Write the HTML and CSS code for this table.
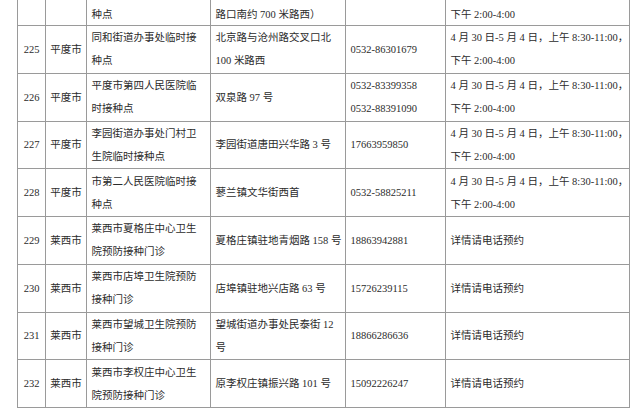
FILE: index.html
```html
<!DOCTYPE html>
<html lang="zh-CN">
<head>
<meta charset="utf-8">
<title>接种点</title>
<link rel="stylesheet" href="styles.css">
</head>
<body>
<div class="sheet">
<table class="sites">
<colgroup>
<col class="c-no"><col class="c-city"><col class="c-name"><col class="c-addr"><col class="c-tel"><col class="c-time">
</colgroup>
<tbody>
<tr class="cont">
<td class="num"></td><td class="city"></td>
<td>种点</td>
<td>路口南约 700 米路西）</td>
<td></td>
<td>下午 2:00-4:00</td>
</tr>
<tr>
<td class="num">225</td><td class="city">平度市</td>
<td>同和街道办事处临时接<br>种点</td>
<td>北京路与沧州路交叉口北<br>100 米路西</td>
<td>0532-86301679</td>
<td>4 月 30 日-5 月 4 日，上午 8:30-11:00，<br>下午 2:00-4:00</td>
</tr>
<tr>
<td class="num">226</td><td class="city">平度市</td>
<td>平度市第四人民医院临<br>时接种点</td>
<td>双泉路 97 号</td>
<td>0532-83399358<br>0532-88391090</td>
<td>4 月 30 日-5 月 4 日，上午 8:30-11:00，<br>下午 2:00-4:00</td>
</tr>
<tr>
<td class="num">227</td><td class="city">平度市</td>
<td>李园街道办事处门村卫<br>生院临时接种点</td>
<td>李园街道唐田兴华路 3 号</td>
<td>17663959850</td>
<td>4 月 30 日-5 月 4 日，上午 8:30-11:00，<br>下午 2:00-4:00</td>
</tr>
<tr>
<td class="num">228</td><td class="city">平度市</td>
<td>市第二人民医院临时接<br>种点</td>
<td>蓼兰镇文华街西首</td>
<td>0532-58825211</td>
<td>4 月 30 日-5 月 4 日，上午 8:30-11:00，<br>下午 2:00-4:00</td>
</tr>
<tr>
<td class="num">229</td><td class="city">莱西市</td>
<td>莱西市夏格庄中心卫生<br>院预防接种门诊</td>
<td>夏格庄镇驻地青烟路 158 号</td>
<td>18863942881</td>
<td>详情请电话预约</td>
</tr>
<tr>
<td class="num">230</td><td class="city">莱西市</td>
<td>莱西市店埠卫生院预防<br>接种门诊</td>
<td>店埠镇驻地兴店路 63 号</td>
<td>15726239115</td>
<td>详情请电话预约</td>
</tr>
<tr>
<td class="num">231</td><td class="city">莱西市</td>
<td>莱西市望城卫生院预防<br>接种门诊</td>
<td>望城街道办事处民泰街 12<br>号</td>
<td>18866286636</td>
<td>详情请电话预约</td>
</tr>
<tr>
<td class="num">232</td><td class="city">莱西市</td>
<td>莱西市李权庄中心卫生<br>院预防接种门诊</td>
<td>原李权庄镇振兴路 101 号</td>
<td>15092226247</td>
<td>详情请电话预约</td>
</tr>
</tbody>
</table>
</div>
</body>
</html>
```

FILE: styles.css
```css
html, body {
  margin: 0;
  padding: 0;
  background: #ffffff;
}

.sheet {
  width: 640px;
  height: 410px;
  overflow: hidden;
  padding-left: 17px;
  box-sizing: border-box;
}

.sites {
  margin-top: -1px;
  border-collapse: collapse;
  table-layout: fixed;
  width: 612px;
  font-family: "Liberation Serif", "Noto Sans CJK SC", serif;
  font-size: 10.5px;
  line-height: 23px;
  color: #2b2b2b;
}

.c-no { width: 28px; }
.c-city { width: 41px; }
.c-name { width: 124px; }
.c-addr { width: 135px; }
.c-tel { width: 100px; }
.c-time { width: 184px; }

.sites td {
  border: 1px solid #9a9a9a;
  height: 47.75px;
  padding: 0 4px 0 4.5px;
  box-sizing: border-box;
  vertical-align: middle;
  white-space: nowrap;
  overflow: hidden;
}

.sites tr.cont td {
  height: 26px;
  padding-top: 4px;
  line-height: 18px;
}

.sites td.num,
.sites td.city {
  text-align: center;
  padding: 0;
}
```
